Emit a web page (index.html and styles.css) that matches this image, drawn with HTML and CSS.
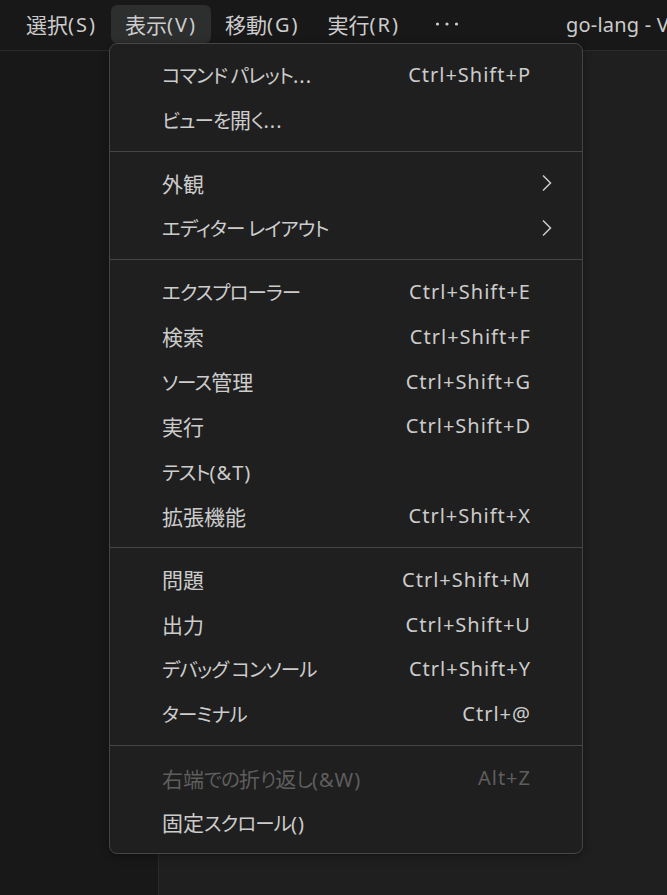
FILE: index.html
```html
<!DOCTYPE html>
<html lang="ja">
<head>
<meta charset="utf-8">
<title>VS Code 表示メニュー</title>
<link rel="stylesheet" href="styles.css">
</head>
<body>
<div class="titlebar">
  <div class="menubar">
    <div class="mb-item">選択<span class="l">(S)</span></div>
    <div class="mb-item active">表示<span class="l">(V)</span></div>
    <div class="mb-item">移動<span class="l">(G)</span></div>
    <div class="mb-item">実行<span class="l">(R)</span></div>
    <div class="mb-item more">
      <svg width="24" height="6" viewBox="0 0 24 6"><circle cx="2.5" cy="3" r="1.6" fill="#cccccc"/><circle cx="12" cy="3" r="1.6" fill="#cccccc"/><circle cx="21.5" cy="3" r="1.6" fill="#cccccc"/></svg>
    </div>
  </div>
  <div class="title">go-lang - Visual Studio Code</div>
</div>
<div class="workbench">
  <div class="sidebar"></div>
  <div class="editor"></div>
</div>

<div class="menu">
  <div class="row"><span><span class="k">コマンド パレット</span><span class="l">...</span></span><span class="kb l">Ctrl+Shift+P</span></div>
  <div class="row"><span><span class="k">ビューを</span>開<span class="k">く</span><span class="l">...</span></span></div>
  <div class="sep"></div>
  <div class="row sub"><span>外観</span><svg class="chev" width="12" height="18" viewBox="0 0 12 18"><path d="M2 1.5 L9.5 9 L2 16.5" fill="none" stroke="#cccccc" stroke-width="1.5"/></svg></div>
  <div class="row sub"><span class="k">エディター レイアウト</span><svg class="chev" width="12" height="18" viewBox="0 0 12 18"><path d="M2 1.5 L9.5 9 L2 16.5" fill="none" stroke="#cccccc" stroke-width="1.5"/></svg></div>
  <div class="sep"></div>
  <div class="row"><span class="k">エクスプローラー</span><span class="kb l">Ctrl+Shift+E</span></div>
  <div class="row"><span>検索</span><span class="kb l">Ctrl+Shift+F</span></div>
  <div class="row"><span><span class="k">ソース</span>管理</span><span class="kb l">Ctrl+Shift+G</span></div>
  <div class="row"><span>実行</span><span class="kb l">Ctrl+Shift+D</span></div>
  <div class="row"><span><span class="k">テスト</span><span class="l">(&amp;T)</span></span></div>
  <div class="row"><span>拡張機能</span><span class="kb l">Ctrl+Shift+X</span></div>
  <div class="sep"></div>
  <div class="row"><span>問題</span><span class="kb l">Ctrl+Shift+M</span></div>
  <div class="row"><span>出力</span><span class="kb l">Ctrl+Shift+U</span></div>
  <div class="row"><span class="k">デバッグ コンソール</span><span class="kb l">Ctrl+Shift+Y</span></div>
  <div class="row"><span class="k">ターミナル</span><span class="kb l">Ctrl+@</span></div>
  <div class="sep"></div>
  <div class="row disabled"><span>右端<span class="k">での</span>折<span class="k">り</span>返<span class="k">し</span><span class="l">(&amp;W)</span></span><span class="kb l">Alt+Z</span></div>
  <div class="row"><span>固定<span class="k">スクロール</span><span class="l">()</span></span></div>
</div>
</body>
</html>
```

FILE: styles.css
```css
* { box-sizing: border-box; }

html, body {
  margin: 0;
  padding: 0;
  height: 100%;
}

body {
  background: #181818;
  color: #cccccc;
  font-family: "Noto Sans CJK JP", "Noto Sans", sans-serif;
  font-size: 21px;
  font-feature-settings: "palt";
  overflow: hidden;
  position: relative;
}

/* Latin runs: Segoe-like width */
.l {
  font-family: "Noto Sans", "Noto Sans CJK JP", sans-serif;
  font-size: 20px;
  letter-spacing: 1px;
}

/* Kana runs: proportional like Yu Gothic UI */
.k {
  font-size: 19.5px;
  letter-spacing: -0.9px;
}

.titlebar {
  height: 51px;
  border-bottom: 1px solid #2b2b2b;
  display: flex;
  align-items: flex-start;
  padding-top: 5px;
  padding-left: 12px;
  white-space: nowrap;
  overflow: hidden;
}

.menubar {
  display: flex;
}

.mb-item {
  height: 38px;
  padding: 0 14px;
  display: flex;
  align-items: center;
  border-radius: 6px;
  color: #cccccc;
}

.mb-item .l {
  letter-spacing: 2px;
}

.mb-item.active {
  background: #2d2e2e;
}

.mb-item.more {
  padding: 0 20px 0 21px;
}

.title {
  margin-left: 87px;
  height: 38px;
  display: flex;
  align-items: center;
  color: #cccccc;
  font-family: "Noto Sans", sans-serif;
  font-size: 20px;
  letter-spacing: 0.2px;
}

.workbench {
  display: flex;
  height: calc(100% - 51px);
}

.sidebar {
  width: 159px;
  background: #181818;
  border-right: 1px solid #2b2b2b;
}

.editor {
  flex: 1;
  background: #1f1f1f;
}

.menu {
  position: absolute;
  left: 109px;
  top: 43px;
  width: 474px;
  background: #1f1f1f;
  border: 1px solid #454545;
  border-radius: 8px;
  padding: 8px 0 8px;
  box-shadow: 0 2px 8px rgba(0, 0, 0, 0.36);
}

.row {
  height: 44.8px;
  display: flex;
  align-items: center;
  justify-content: space-between;
  padding: 0 52px;
  color: #cccccc;
  white-space: nowrap;
}

.row .kb {
  margin-right: -1px;
}

.row.sub {
  padding-right: 29px;
}

.row.disabled {
  color: #5e5e5e;
}

.chev {
  display: block;
}

.sep {
  height: 19px;
  display: flex;
  align-items: center;
}

.sep::before {
  content: "";
  display: block;
  width: 100%;
  height: 1px;
  background: #454545;
}
```
